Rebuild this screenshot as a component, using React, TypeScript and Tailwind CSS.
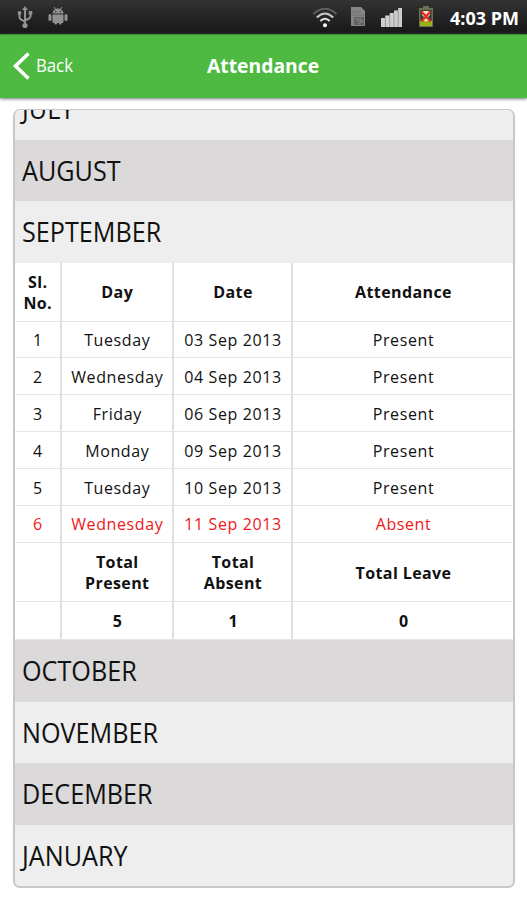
const rows = [
  ["1", "Tuesday", "03 Sep 2013", "Present"],
  ["2", "Wednesday", "04 Sep 2013", "Present"],
  ["3", "Friday", "06 Sep 2013", "Present"],
  ["4", "Monday", "09 Sep 2013", "Present"],
  ["5", "Tuesday", "10 Sep 2013", "Present"],
  ["6", "Wednesday", "11 Sep 2013", "Absent"],
];

const columns = "grid grid-cols-[46.5px_112.5px_119px_1fr]";

function Month({ name, dark = false }: { name: string; dark?: boolean }) {
  return (
    <div className={`flex h-[61.5px] shrink-0 items-center pl-[7px] ${dark ? "bg-[#dbd9da]" : "bg-[#eeeeee]"}`}>
      <span className="origin-left scale-x-[0.933] text-[27px] leading-none text-[#111]">{name}</span>
    </div>
  );
}

function Row({ cells, height, tone = "" }: { cells: string[]; height: string; tone?: string }) {
  return (
    <div className={`${columns} ${height} ${tone} shrink-0 border-b border-[#e6e6e6] text-center text-[16px] leading-[21px]`}>
      {cells.map((cell, i) => (
        <div key={i} className={`flex items-center justify-center pt-[2px] pl-px whitespace-pre-line ${i < 3 ? "border-r-2 border-[#e0e0e0]" : ""}`}>
          <span>{cell}</span>
        </div>
      ))}
    </div>
  );
}

function StatusBar() {
  return (
    <div className="flex h-[34px] items-center bg-linear-to-b from-[#333] to-[#171717]">
      <svg className="ml-[16px]" width="18" height="24" viewBox="0 0 18 24" fill="none" stroke="#929292" strokeWidth="2">
        <path d="M9 3v18M3.500 8v4q0 2 2.500 3L9 17M14.500 8v3q0 2-2.500 3L9 15.500" />
        <path d="M9 1l3 4H6z" fill="#929292" stroke="none" />
        <circle cx="3.500" cy="8" r="1.900" fill="#929292" stroke="none" />
        <path d="M12.700 6h3.600v3.600h-3.600z" fill="#929292" stroke="none" />
        <circle cx="9" cy="20.500" r="2.600" fill="#929292" stroke="none" />
      </svg>
      <svg className="mb-[2px] ml-[14px]" width="20" height="20" viewBox="0 0 20 20" fill="#929292">
        <path d="M4.500 7.500a5.500 5 0 0 1 11 0zM4.500 8.500h11v7q0 1.500-1.500 1.500H6q-1.500 0-1.500-1.500z" />
        <path d="M6 1l2 3M14 1l-2 3" stroke="#929292" strokeWidth="1" />
        <rect x="0.500" y="8" width="3" height="7" rx="1.500" />
        <rect x="16.500" y="8" width="3" height="7" rx="1.500" />
        <rect x="6.500" y="15" width="2.500" height="3.500" rx="1" />
        <rect x="11" y="15" width="2.500" height="3.500" rx="1" />
        <circle cx="7.700" cy="5.500" r="0.700" fill="#292929" />
        <circle cx="12.300" cy="5.500" r="0.700" fill="#292929" />
      </svg>
      <svg className="ml-auto" width="26" height="22" viewBox="0 0 26 22" fill="none" strokeWidth="2">
        <path d="M1.500 8Q13-2.500 24.500 8" stroke="#606060" />
        <path d="M4.800 11.500Q13 3.500 21.200 11.500" stroke="#c9c9c9" />
        <path d="M8.300 15Q13 10.500 17.700 15" stroke="#e5e5e5" />
        <circle cx="13" cy="19.300" r="2" fill="#fff" />
      </svg>
      <svg className="ml-[12px]" width="16" height="20" viewBox="0 0 16 20">
        <path d="M1 0h10l4 4v15H1z" fill="#858585" />
        <path d="M2 8h12M2 5h9" stroke="#737373" />
        <path d="M4 10h10v8H4z" fill="#626262" />
        <path d="M5 12h3v3m2-4v3h3m-5 3 5-3" stroke="#888" fill="none" />
      </svg>
      <svg className="mt-[2px] ml-[15px]" width="22" height="20" viewBox="0 0 22 20" fill="#cecece">
        <path d="M0 10h4.200v9H0zM4.200 7.500h4.500V19H4.200zM8.700 5H13v14H8.700zM13 2.500h4.200V19H13zM17.200 0H21v19h-3.800z" />
        <path d="M4.400 10v9M8.700 7.500V19M13 5v14M17.200 2.500V19" stroke="#929292" strokeWidth=".9" />
      </svg>
      <svg className="ml-[15px]" width="16" height="22" viewBox="0 0 16 22">
        <path d="M5 0h6v2h4v19H1V2h4z" fill="#697154" />
        <path d="M2.500 4h11v11h-11z" fill="#363c2e" />
        <path d="M2 15h12v5H2z" fill="#98b31c" />
        <path d="M4 5h8v4l-2 2 2 4H4l2-4-2-2z" fill="#f4dfda" />
        <path d="M3.500 5.500l9 10M12.500 5.500l-9 10" stroke="#e3291d" strokeWidth="2.200" />
      </svg>
      <span className="mt-px mr-[7px] ml-[16px] w-[70px] whitespace-nowrap text-[18px] leading-6 font-bold text-white">4:03 PM</span>
    </div>
  );
}

export default function App() {
  return (
    <div className="flex h-[900px] w-[527px] flex-col bg-white font-['Open_Sans','Noto_Sans',sans-serif]">
      <StatusBar />
      <header className="grid h-[64px] grid-cols-[1fr_auto_1fr] items-center border-t border-[#3b8b32] bg-[#4eba41] pb-[2px] text-white shadow-[0_1px_3px_#777]">
        <div className="flex items-center pl-[12px]">
          <svg width="19" height="30" viewBox="0 0 19 30" fill="none" stroke="white" strokeWidth="3.600">
            <path d="M16.500 2.500L3.500 15l13 12.500" />
          </svg>
          <span className="ml-[5px] origin-left scale-x-[0.93] text-[18px]">Back</span>
        </div>
        <h1 className="scale-x-[0.965] pt-px text-[20px] font-bold">Attendance</h1>
      </header>
      <main className="mr-[12px] ml-[13px] mt-[11px] flex h-[779px] flex-col overflow-hidden rounded-[7px] border-2 border-t-[1.5px] border-[#c8c8c8] bg-[#eee]">
        <div className="flex h-[29.500px] shrink-0 flex-col justify-end overflow-hidden">
          <Month name="JULY" />
        </div>
        <Month name="AUGUST" dark />
        <Month name="SEPTEMBER" />
        <section className="flex h-[377.500px] shrink-0 flex-col bg-white text-[#111]">
          <Row cells={["Sl.\nNo.", "Day", "Date", "Attendance"]} height="h-[59px]" tone="font-bold tracking-[0.4px]" />
          {rows.map((cells) => (
            <Row key={cells[0]} cells={cells} height="h-[36.900px]" tone={cells[3] === "Absent" ? "text-[#f01818] tracking-[0.600px]" : "tracking-[0.600px]"} />
          ))}
          <Row cells={["", "Total\nPresent", "Total\nAbsent", "Total Leave"]} height="h-[59.500px]" tone="font-bold tracking-[0.4px]" />
          <Row cells={["", "5", "1", "0"]} height="h-[37.600px]" tone="font-bold" />
        </section>
        <Month name="OCTOBER" dark />
        <Month name="NOVEMBER" />
        <Month name="DECEMBER" dark />
        <Month name="JANUARY" />
      </main>
    </div>
  );
}
